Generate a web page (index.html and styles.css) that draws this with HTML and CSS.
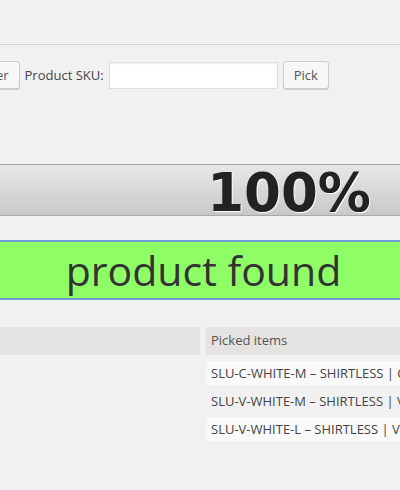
FILE: index.html
```html
<!DOCTYPE html>
<html lang="en">
<head>
<meta charset="utf-8">
<title>Pick products</title>
<link rel="stylesheet" href="styles.css">
</head>
<body>
<div class="page">
  <div class="header-rule"></div>
  <form class="pick-form">
    <button type="button" class="button">Filter</button>
    <label class="sku-label" for="sku">Product SKU:</label>
    <input class="sku-input" id="sku" type="text">
    <button type="button" class="button">Pick</button>
  </form>
  <div class="progress">100%</div>
  <div class="status">product found</div>
  <div class="items">
    <div class="head">Order items</div>
    <div class="head">Picked items</div>
    <div class="cell"></div>
    <div class="cell picked odd">SLU-C-WHITE-M – SHIRTLESS | Crew Neck | White | M</div>
    <div class="cell"></div>
    <div class="cell picked">SLU-V-WHITE-M – SHIRTLESS | V-Neck | White | M</div>
    <div class="cell"></div>
    <div class="cell picked odd">SLU-V-WHITE-L – SHIRTLESS | V-Neck | White | L</div>
  </div>
</div>
</body>
</html>
```
FILE: styles.css
```css
html, body {
  margin: 0;
  padding: 0;
  background: #f1f1f1;
  overflow: hidden;
}
body {
  font-family: "Open Sans", "Liberation Sans", sans-serif;
  font-size: 13px;
  color: #444;
}
.page {
  width: 400px;
  height: 490px;
  overflow: hidden;
}
.header-rule {
  height: 44px;
  border-bottom: 1px solid #d2d2d2;
}
.pick-form {
  display: flex;
  align-items: center;
  gap: 5px;
  margin: 16px 0 0 -33px;
  height: 28px;
  white-space: nowrap;
}
.button {
  box-sizing: border-box;
  height: 28px;
  padding: 0 10px;
  line-height: 26px;
  font-family: inherit;
  font-size: 13px;
  color: #555;
  background: #f7f7f7;
  border: 1px solid #cccccc;
  border-radius: 3px;
  box-shadow: 0 1px 0 #cccccc;
  flex: none;
}
.sku-label {
  color: #444;
  flex: none;
}
.sku-input {
  box-sizing: border-box;
  width: 169px;
  height: 27px;
  margin: 0;
  border: 1px solid #dddddd;
  background: #fff;
  box-shadow: inset 0 1px 2px rgba(0, 0, 0, 0.07);
  flex: none;
}
.progress {
  margin: 75px 0 0 -20px;
  width: 618px;
  height: 50px;
  border-top: 1px solid #a9a9a9;
  border-bottom: 1px solid #a9a9a9;
  background: linear-gradient(to bottom, #e6e6e6 0%, #dddddd 35%, #c8c8c8 100%);
  text-align: center;
  font-family: "DejaVu Sans", sans-serif;
  font-weight: bold;
  font-size: 53px;
  line-height: 55px;
  color: #222;
  text-shadow: 1px 1px 1px #fff;
  overflow: hidden;
}
.status {
  margin: 24px 0 0 -20px;
  width: 447px;
  height: 56px;
  border-top: 2px solid #6f9bd2;
  border-bottom: 2px solid #6f9bd2;
  background: #8ffd66;
  text-align: center;
  font-size: 41px;
  line-height: 56px;
  color: #333;
}
.items {
  display: grid;
  grid-template-columns: 240px 300px;
  column-gap: 6px;
  row-gap: 4px;
  margin: 27px 0 0 -40px;
}
.head {
  height: 27px;
  line-height: 27px;
  padding-left: 5px;
  background: #e4e3e1;
  color: #555;
  box-shadow: 0 1px 1px rgba(0, 0, 0, 0.05);
  margin-bottom: 3px;
  white-space: nowrap;
  overflow: hidden;
}
.cell {
  height: 24px;
  line-height: 24px;
  padding-left: 5px;
  white-space: nowrap;
  overflow: hidden;
}
.head:first-child {
  color: transparent;
}
.picked.odd {
  background: #f9f9f9;
}
```
